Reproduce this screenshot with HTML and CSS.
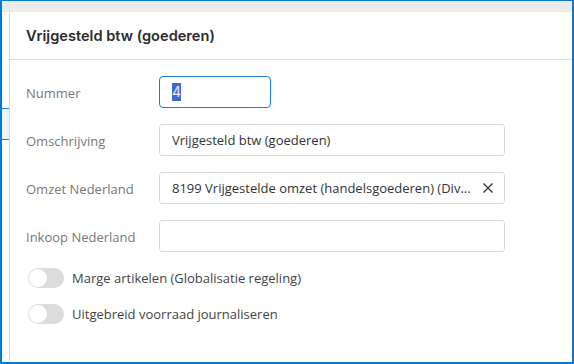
FILE: index.html
```html
<!DOCTYPE html>
<html lang="nl">
<head>
    <meta charset="UTF-8">
    <meta name="viewport" content="width=device-width, initial-scale=1.0">
    <title>Btw-code</title>
    <link rel="stylesheet" href="styles.css">
</head>
<body>
    <div class="frame">
        <div class="topbar"></div>
        <div class="main">
            <div class="side">
                <div class="side-row selected"></div>
            </div>

            <div class="panel">
                <div class="panel-head">
                    <h1 class="title">Vrijgesteld btw (goederen)</h1>
                </div>

                <div class="form">
                    <div class="field">
                        <label class="field-label">Nummer</label>
                        <div class="input input-short focused"><span class="selection">4</span></div>
                    </div>
                    <div class="field">
                        <label class="field-label">Omschrijving</label>
                        <div class="input">Vrijgesteld btw (goederen)</div>
                    </div>
                    <div class="field">
                        <label class="field-label">Omzet Nederland</label>
                        <div class="input input-select">
                            <span class="select-value">8199 Vrijgestelde omzet (handelsgoederen) (Div...</span>
                            <svg class="clear-icon" width="12" height="12" viewBox="0 0 12 12">
                                <path d="M1.5 1.5 L10.5 10.5 M10.5 1.5 L1.5 10.5" stroke="#333" stroke-width="1.3" fill="none"/>
                            </svg>
                        </div>
                    </div>
                    <div class="field">
                        <label class="field-label">Inkoop Nederland</label>
                        <div class="input"></div>
                    </div>

                    <div class="toggles">
                        <div class="toggle-row">
                            <span class="toggle"><span class="knob"></span></span>
                            <span class="toggle-label">Marge artikelen (Globalisatie regeling)</span>
                        </div>
                        <div class="toggle-row">
                            <span class="toggle"><span class="knob"></span></span>
                            <span class="toggle-label">Uitgebreid voorraad journaliseren</span>
                        </div>
                    </div>
                </div>
            </div>
        </div>
    </div>
</body>
</html>
```

FILE: styles.css
```css
* {
    box-sizing: border-box;
}

body {
    margin: 0;
    padding: 0;
    font-family: 'Open Sans', 'Noto Sans', sans-serif;
    background-color: #fff;
}

.frame {
    width: 574px;
    height: 364px;
    display: flex;
    flex-direction: column;
    border: 2px solid #0b77cf;
    border-top-width: 1px;
    overflow: hidden;
}

.topbar {
    height: 11px;
    background-color: #ebebeb;
}

.main {
    flex: 1;
    display: flex;
}

.side {
    width: 8px;
    border-right: 1px solid #d8d8d8;
    padding-top: 96px;
}

.side-row {
    height: 32px;
}

.side-row.selected {
    background-color: #eef5fd;
    border-top: 1px solid #1b7bd6;
    border-bottom: 1px solid #1b7bd6;
}

.panel {
    flex: 1;
    display: flex;
    flex-direction: column;
}

.panel-head {
    height: 48px;
    display: flex;
    align-items: center;
    padding-left: 16px;
    border-bottom: 1px solid #d9d9d9;
}

.title {
    margin: 0;
    font-family: 'Inter', sans-serif;
    font-size: 14.6px;
    font-weight: 600;
    color: #2b2b2b;
}

.form {
    padding: 16px 16px 0 16px;
    display: flex;
    flex-direction: column;
    gap: 16px;
}

.field {
    display: flex;
    align-items: center;
}

.field-label {
    width: 133px;
    font-size: 13px;
    color: #787878;
    padding-top: 1px;
}

.input {
    width: 346px;
    height: 32px;
    border: 1px solid #d6d6d6;
    border-radius: 4px;
    padding: 0 12px;
    display: flex;
    align-items: center;
    font-size: 13px;
    color: #333;
}

.input-short {
    width: 112px;
}

.input.focused {
    border: 1.5px solid #1b7bd6;
}

.selection {
    background-color: #3a6cd3;
    color: #f2eaff;
    font-family: 'Inter', sans-serif;
    font-size: 14px;
    line-height: 18px;
}

.input-select {
    justify-content: space-between;
}

.select-value {
    white-space: nowrap;
}

.clear-icon {
    margin-right: -2px;
}

.toggles {
    display: flex;
    flex-direction: column;
    gap: 16px;
    padding-left: 2px;
}

.toggle-row {
    display: flex;
    align-items: center;
    gap: 8px;
}

.toggle {
    width: 36px;
    height: 20px;
    border-radius: 10px;
    background-color: #dcdcdc;
    padding: 1px;
    display: flex;
}

.knob {
    width: 18px;
    height: 18px;
    border-radius: 50%;
    background-color: #fff;
}

.toggle-label {
    font-size: 13px;
    color: #444;
}
```
